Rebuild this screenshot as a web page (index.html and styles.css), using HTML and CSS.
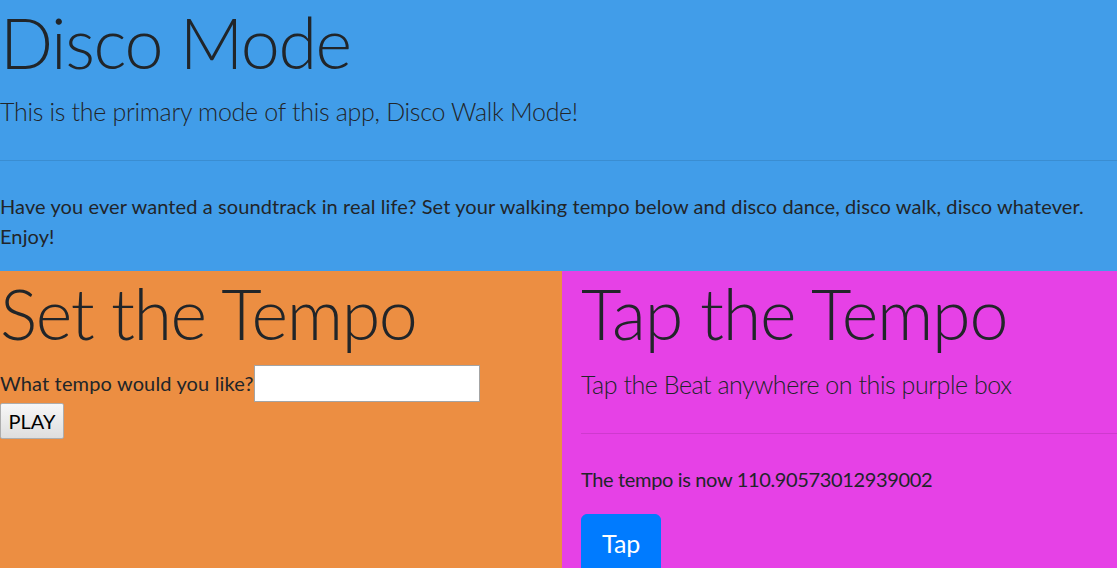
FILE: index.html
```html
<!DOCTYPE html>
<html lang="en">
<head>
<meta charset="utf-8">
<title>Disco Mode</title>
<link rel="stylesheet" href="styles.css">
</head>
<body>
<header class="jumbo">
  <h1 class="display">Disco Mode</h1>
  <p class="lead">This is the primary mode of this app, Disco Walk Mode!</p>
  <hr class="rule">
  <p class="text">Have you ever wanted a soundtrack in real life? Set your walking tempo below and disco dance, disco walk, disco whatever. Enjoy!</p>
</header>
<main class="row">
  <section class="col col-set">
    <h1 class="display">Set the Tempo</h1>
    <div class="field">
      <label class="label" for="tempo">What tempo would you like?</label>
      <input class="input" id="tempo" type="text">
    </div>
    <button class="play" type="button">PLAY</button>
  </section>
  <section class="col col-tap">
    <h1 class="display">Tap the Tempo</h1>
    <p class="lead">Tap the Beat anywhere on this purple box</p>
    <hr class="rule">
    <p class="text text-tempo">The tempo is now 110.90573012939002</p>
    <button class="tap" type="button">Tap</button>
  </section>
</main>
</body>
</html>
```
FILE: styles.css
```css
html, body {
  margin: 0;
  padding: 0;
}
body {
  font-family: "Lato", "Open Sans", "Liberation Sans", sans-serif;
  font-size: 20px;
  line-height: 30px;
  color: #212529;
  background: #e641e6;
  overflow: hidden;
  height: 568px;
  display: flex;
  flex-direction: column;
}
.jumbo {
  background: #419de9;
  padding: 0;
}
.display {
  margin: 0 0 9px 0;
  font-size: 70px;
  font-weight: 300;
  line-height: 84px;
  letter-spacing: -1.4px;
}
.lead {
  margin: 0 0 20px 0;
  font-size: 25px;
  font-weight: 300;
  line-height: 37px;
  letter-spacing: -0.3px;
}
.rule {
  margin: 30px 0;
  border: 0;
  border-top: 1px solid rgba(0, 0, 0, 0.1);
  height: 0;
}
.text {
  margin: 0 0 20px 0;
  letter-spacing: 0.1px;
}
.text-tempo {
  letter-spacing: -0.35px;
}
.row {
  flex: 1;
  display: grid;
  grid-template-columns: 562px 1fr;
}
.col-set {
  background: #ec8e42;
}
.col-tap {
  background: #e641e6;
  padding-left: 19px;
}
.col-tap .display {
  margin-bottom: 10px;
  letter-spacing: -1.2px;
}
.col-tap .lead {
  padding-top: 1px;
  margin-bottom: 19px;
  letter-spacing: -0.45px;
}
.label {
  letter-spacing: 0.15px;
}
.field {
  display: flex;
  align-items: center;
  height: 38px;
}
.input {
  width: 226px;
  height: 37px;
  box-sizing: border-box;
  border: 1px solid #a4a4a4;
  background: #fff;
  margin: 0;
  padding: 1px 3px;
  font: inherit;
}
.play {
  display: block;
  margin-top: 1px;
  width: 64px;
  height: 36px;
  box-sizing: border-box;
  font-family: "Lato", "Open Sans", sans-serif;
  font-size: 20px;
  color: #000;
  border: 1px solid #adadad;
  border-radius: 2px;
  background: linear-gradient(#f7f7f7, #dedede);
  padding: 0;
}
.tap {
  display: block;
  margin-top: 1px;
  font-family: inherit;
  font-size: 25px;
  line-height: 37.5px;
  padding: 10px 20px;
  color: #fff;
  background: #007bff;
  border: 1px solid #007bff;
  border-radius: 6px;
}
```
